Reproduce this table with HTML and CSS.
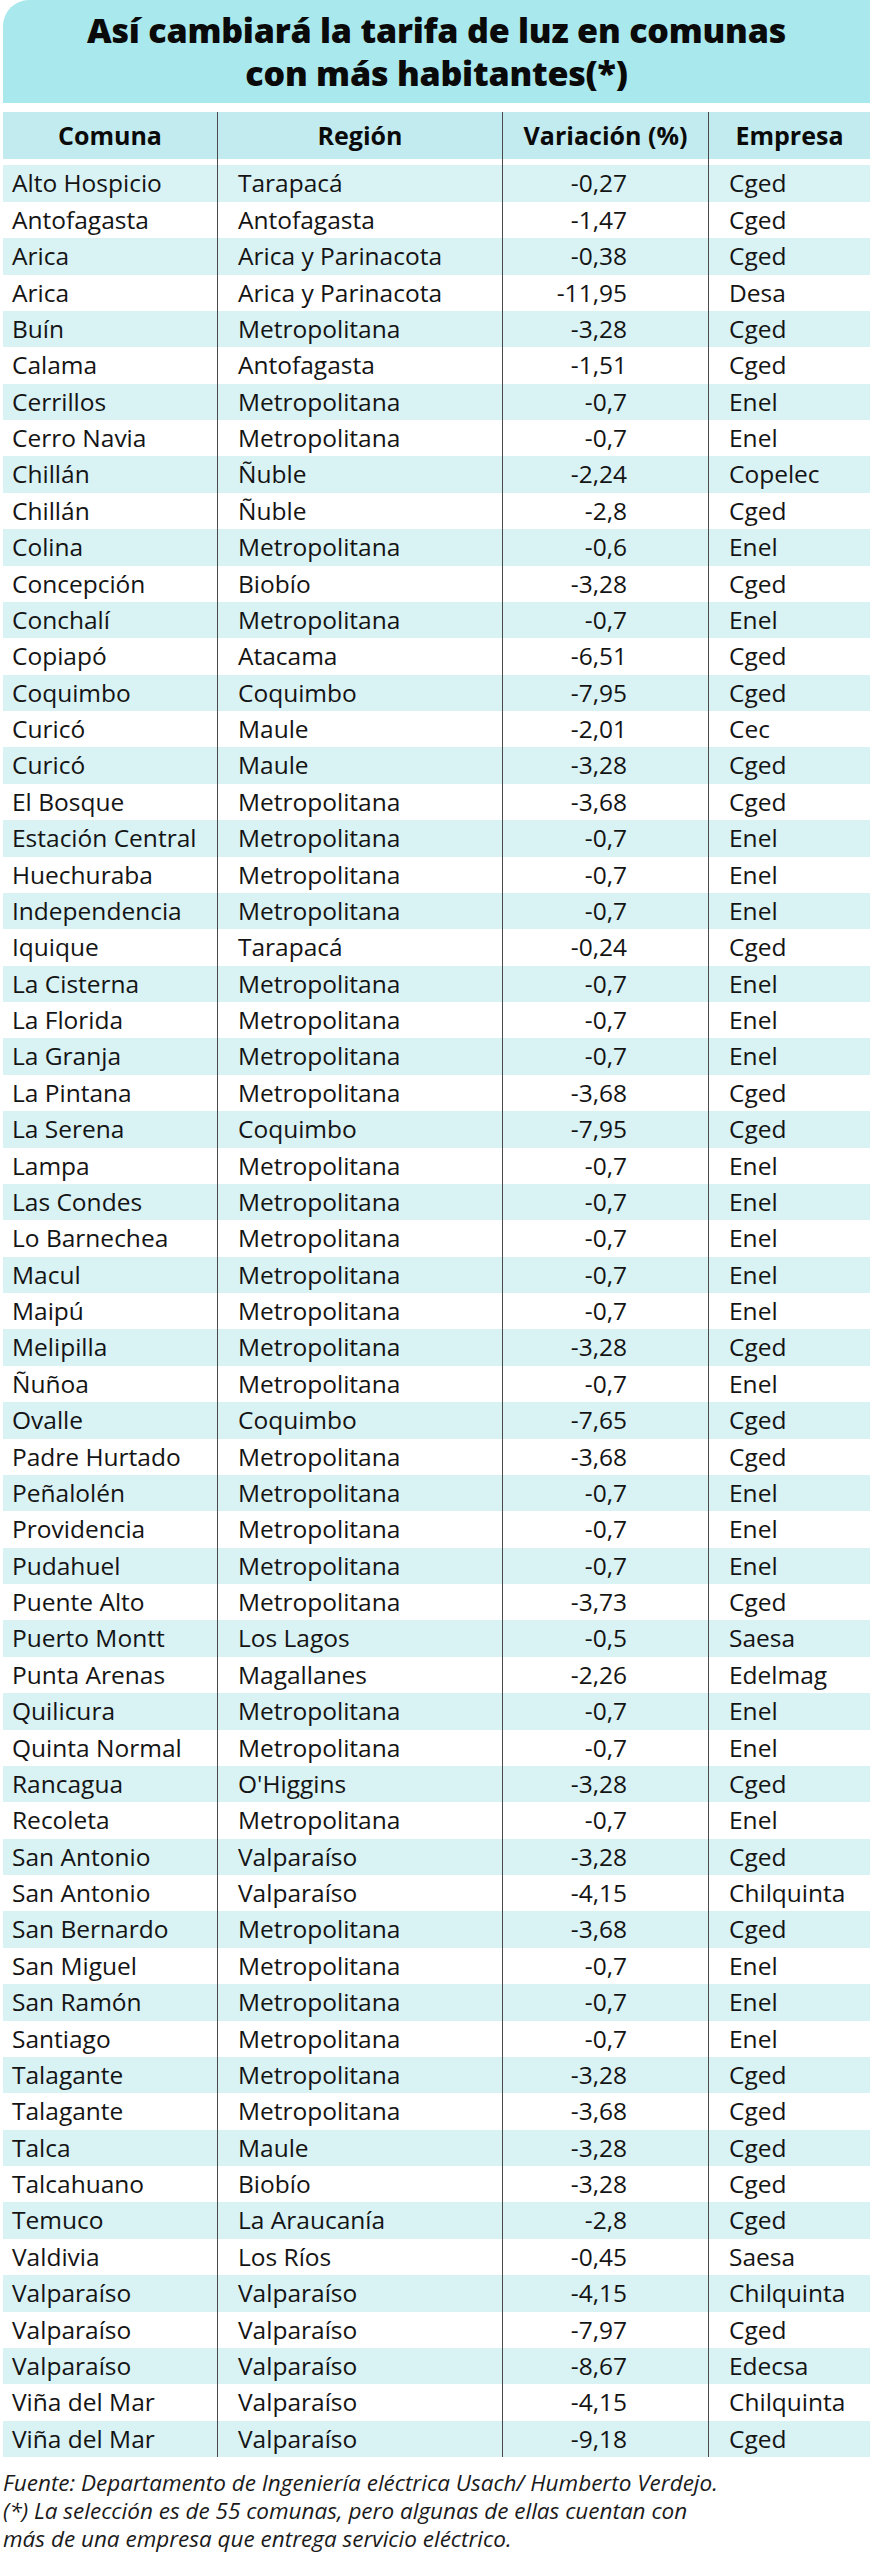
FILE: index.html
```html
<!DOCTYPE html>
<html lang="es">
<head>
<meta charset="utf-8">
<title>Así cambiará la tarifa de luz en comunas con más habitantes</title>
<link rel="stylesheet" href="styles.css">
</head>
<body>
<div class="page">
  <h1 class="title">Así cambiará la tarifa de luz en comunas<br>con más habitantes(*)</h1>
  <div class="table">
    <div class="row head"><div class="c c1">Comuna</div><div class="c c2">Región</div><div class="c c3">Variación (%)</div><div class="c c4">Empresa</div></div>
    <div class="row"><div class="c c1">Alto Hospicio</div><div class="c c2">Tarapacá</div><div class="c c3">-0,27</div><div class="c c4">Cged</div></div>
    <div class="row"><div class="c c1">Antofagasta</div><div class="c c2">Antofagasta</div><div class="c c3">-1,47</div><div class="c c4">Cged</div></div>
    <div class="row"><div class="c c1">Arica</div><div class="c c2">Arica y Parinacota</div><div class="c c3">-0,38</div><div class="c c4">Cged</div></div>
    <div class="row"><div class="c c1">Arica</div><div class="c c2">Arica y Parinacota</div><div class="c c3">-11,95</div><div class="c c4">Desa</div></div>
    <div class="row"><div class="c c1">Buín</div><div class="c c2">Metropolitana</div><div class="c c3">-3,28</div><div class="c c4">Cged</div></div>
    <div class="row"><div class="c c1">Calama</div><div class="c c2">Antofagasta</div><div class="c c3">-1,51</div><div class="c c4">Cged</div></div>
    <div class="row"><div class="c c1">Cerrillos</div><div class="c c2">Metropolitana</div><div class="c c3">-0,7</div><div class="c c4">Enel</div></div>
    <div class="row"><div class="c c1">Cerro Navia</div><div class="c c2">Metropolitana</div><div class="c c3">-0,7</div><div class="c c4">Enel</div></div>
    <div class="row"><div class="c c1">Chillán</div><div class="c c2">Ñuble</div><div class="c c3">-2,24</div><div class="c c4">Copelec</div></div>
    <div class="row"><div class="c c1">Chillán</div><div class="c c2">Ñuble</div><div class="c c3">-2,8</div><div class="c c4">Cged</div></div>
    <div class="row"><div class="c c1">Colina</div><div class="c c2">Metropolitana</div><div class="c c3">-0,6</div><div class="c c4">Enel</div></div>
    <div class="row"><div class="c c1">Concepción</div><div class="c c2">Biobío</div><div class="c c3">-3,28</div><div class="c c4">Cged</div></div>
    <div class="row"><div class="c c1">Conchalí</div><div class="c c2">Metropolitana</div><div class="c c3">-0,7</div><div class="c c4">Enel</div></div>
    <div class="row"><div class="c c1">Copiapó</div><div class="c c2">Atacama</div><div class="c c3">-6,51</div><div class="c c4">Cged</div></div>
    <div class="row"><div class="c c1">Coquimbo</div><div class="c c2">Coquimbo</div><div class="c c3">-7,95</div><div class="c c4">Cged</div></div>
    <div class="row"><div class="c c1">Curicó</div><div class="c c2">Maule</div><div class="c c3">-2,01</div><div class="c c4">Cec</div></div>
    <div class="row"><div class="c c1">Curicó</div><div class="c c2">Maule</div><div class="c c3">-3,28</div><div class="c c4">Cged</div></div>
    <div class="row"><div class="c c1">El Bosque</div><div class="c c2">Metropolitana</div><div class="c c3">-3,68</div><div class="c c4">Cged</div></div>
    <div class="row"><div class="c c1">Estación Central</div><div class="c c2">Metropolitana</div><div class="c c3">-0,7</div><div class="c c4">Enel</div></div>
    <div class="row"><div class="c c1">Huechuraba</div><div class="c c2">Metropolitana</div><div class="c c3">-0,7</div><div class="c c4">Enel</div></div>
    <div class="row"><div class="c c1">Independencia</div><div class="c c2">Metropolitana</div><div class="c c3">-0,7</div><div class="c c4">Enel</div></div>
    <div class="row"><div class="c c1">Iquique</div><div class="c c2">Tarapacá</div><div class="c c3">-0,24</div><div class="c c4">Cged</div></div>
    <div class="row"><div class="c c1">La Cisterna</div><div class="c c2">Metropolitana</div><div class="c c3">-0,7</div><div class="c c4">Enel</div></div>
    <div class="row"><div class="c c1">La Florida</div><div class="c c2">Metropolitana</div><div class="c c3">-0,7</div><div class="c c4">Enel</div></div>
    <div class="row"><div class="c c1">La Granja</div><div class="c c2">Metropolitana</div><div class="c c3">-0,7</div><div class="c c4">Enel</div></div>
    <div class="row"><div class="c c1">La Pintana</div><div class="c c2">Metropolitana</div><div class="c c3">-3,68</div><div class="c c4">Cged</div></div>
    <div class="row"><div class="c c1">La Serena</div><div class="c c2">Coquimbo</div><div class="c c3">-7,95</div><div class="c c4">Cged</div></div>
    <div class="row"><div class="c c1">Lampa</div><div class="c c2">Metropolitana</div><div class="c c3">-0,7</div><div class="c c4">Enel</div></div>
    <div class="row"><div class="c c1">Las Condes</div><div class="c c2">Metropolitana</div><div class="c c3">-0,7</div><div class="c c4">Enel</div></div>
    <div class="row"><div class="c c1">Lo Barnechea</div><div class="c c2">Metropolitana</div><div class="c c3">-0,7</div><div class="c c4">Enel</div></div>
    <div class="row"><div class="c c1">Macul</div><div class="c c2">Metropolitana</div><div class="c c3">-0,7</div><div class="c c4">Enel</div></div>
    <div class="row"><div class="c c1">Maipú</div><div class="c c2">Metropolitana</div><div class="c c3">-0,7</div><div class="c c4">Enel</div></div>
    <div class="row"><div class="c c1">Melipilla</div><div class="c c2">Metropolitana</div><div class="c c3">-3,28</div><div class="c c4">Cged</div></div>
    <div class="row"><div class="c c1">Ñuñoa</div><div class="c c2">Metropolitana</div><div class="c c3">-0,7</div><div class="c c4">Enel</div></div>
    <div class="row"><div class="c c1">Ovalle</div><div class="c c2">Coquimbo</div><div class="c c3">-7,65</div><div class="c c4">Cged</div></div>
    <div class="row"><div class="c c1">Padre Hurtado</div><div class="c c2">Metropolitana</div><div class="c c3">-3,68</div><div class="c c4">Cged</div></div>
    <div class="row"><div class="c c1">Peñalolén</div><div class="c c2">Metropolitana</div><div class="c c3">-0,7</div><div class="c c4">Enel</div></div>
    <div class="row"><div class="c c1">Providencia</div><div class="c c2">Metropolitana</div><div class="c c3">-0,7</div><div class="c c4">Enel</div></div>
    <div class="row"><div class="c c1">Pudahuel</div><div class="c c2">Metropolitana</div><div class="c c3">-0,7</div><div class="c c4">Enel</div></div>
    <div class="row"><div class="c c1">Puente Alto</div><div class="c c2">Metropolitana</div><div class="c c3">-3,73</div><div class="c c4">Cged</div></div>
    <div class="row"><div class="c c1">Puerto Montt</div><div class="c c2">Los Lagos</div><div class="c c3">-0,5</div><div class="c c4">Saesa</div></div>
    <div class="row"><div class="c c1">Punta Arenas</div><div class="c c2">Magallanes</div><div class="c c3">-2,26</div><div class="c c4">Edelmag</div></div>
    <div class="row"><div class="c c1">Quilicura</div><div class="c c2">Metropolitana</div><div class="c c3">-0,7</div><div class="c c4">Enel</div></div>
    <div class="row"><div class="c c1">Quinta Normal</div><div class="c c2">Metropolitana</div><div class="c c3">-0,7</div><div class="c c4">Enel</div></div>
    <div class="row"><div class="c c1">Rancagua</div><div class="c c2">O'Higgins</div><div class="c c3">-3,28</div><div class="c c4">Cged</div></div>
    <div class="row"><div class="c c1">Recoleta</div><div class="c c2">Metropolitana</div><div class="c c3">-0,7</div><div class="c c4">Enel</div></div>
    <div class="row"><div class="c c1">San Antonio</div><div class="c c2">Valparaíso</div><div class="c c3">-3,28</div><div class="c c4">Cged</div></div>
    <div class="row"><div class="c c1">San Antonio</div><div class="c c2">Valparaíso</div><div class="c c3">-4,15</div><div class="c c4">Chilquinta</div></div>
    <div class="row"><div class="c c1">San Bernardo</div><div class="c c2">Metropolitana</div><div class="c c3">-3,68</div><div class="c c4">Cged</div></div>
    <div class="row"><div class="c c1">San Miguel</div><div class="c c2">Metropolitana</div><div class="c c3">-0,7</div><div class="c c4">Enel</div></div>
    <div class="row"><div class="c c1">San Ramón</div><div class="c c2">Metropolitana</div><div class="c c3">-0,7</div><div class="c c4">Enel</div></div>
    <div class="row"><div class="c c1">Santiago</div><div class="c c2">Metropolitana</div><div class="c c3">-0,7</div><div class="c c4">Enel</div></div>
    <div class="row"><div class="c c1">Talagante</div><div class="c c2">Metropolitana</div><div class="c c3">-3,28</div><div class="c c4">Cged</div></div>
    <div class="row"><div class="c c1">Talagante</div><div class="c c2">Metropolitana</div><div class="c c3">-3,68</div><div class="c c4">Cged</div></div>
    <div class="row"><div class="c c1">Talca</div><div class="c c2">Maule</div><div class="c c3">-3,28</div><div class="c c4">Cged</div></div>
    <div class="row"><div class="c c1">Talcahuano</div><div class="c c2">Biobío</div><div class="c c3">-3,28</div><div class="c c4">Cged</div></div>
    <div class="row"><div class="c c1">Temuco</div><div class="c c2">La Araucanía</div><div class="c c3">-2,8</div><div class="c c4">Cged</div></div>
    <div class="row"><div class="c c1">Valdivia</div><div class="c c2">Los Ríos</div><div class="c c3">-0,45</div><div class="c c4">Saesa</div></div>
    <div class="row"><div class="c c1">Valparaíso</div><div class="c c2">Valparaíso</div><div class="c c3">-4,15</div><div class="c c4">Chilquinta</div></div>
    <div class="row"><div class="c c1">Valparaíso</div><div class="c c2">Valparaíso</div><div class="c c3">-7,97</div><div class="c c4">Cged</div></div>
    <div class="row"><div class="c c1">Valparaíso</div><div class="c c2">Valparaíso</div><div class="c c3">-8,67</div><div class="c c4">Edecsa</div></div>
    <div class="row"><div class="c c1">Viña del Mar</div><div class="c c2">Valparaíso</div><div class="c c3">-4,15</div><div class="c c4">Chilquinta</div></div>
    <div class="row"><div class="c c1">Viña del Mar</div><div class="c c2">Valparaíso</div><div class="c c3">-9,18</div><div class="c c4">Cged</div></div>
  </div>
  <p class="notes">Fuente: Departamento de Ingeniería eléctrica Usach/ Humberto Verdejo.<br>(*) La selección es de 55 comunas, pero algunas de ellas cuentan con<br>más de una empresa que entrega servicio eléctrico.</p>
</div>
</body>
</html>
```
FILE: styles.css
```css
html, body {
  margin: 0;
  padding: 0;
  background: #ffffff;
}

.page {
  width: 867px;
  margin: 0 0 0 3px;
  font-family: "Open Sans", "Noto Sans", sans-serif;
  color: #141414;
}

.title {
  margin: 0;
  padding: 9px 0 9px;
  background: #a9e8ec;
  border-top-left-radius: 26px;
  text-align: center;
  font-size: 34px;
  line-height: 42.7px;
  font-weight: 800;
  font-stretch: 100%;
  letter-spacing: -0.2px;
  color: #0a0a0a;
}

.table {
  margin-top: 9px;
  display: flex;
  flex-direction: column;
}

.row {
  display: grid;
  grid-template-columns: 214px 285px 206px 1fr;
  height: 36.38px;
  font-size: 24.5px;
  line-height: 36.38px;
  font-stretch: 93%;
}

.row:nth-child(even) {
  background: #d9f2f4;
}

.row.head {
  height: 53px;
  background: linear-gradient(#c2ebef 0, #c2ebef 47px, #ffffff 47px);
  font-weight: 700;
  font-size: 25px;
  line-height: 47px;
  font-stretch: 95%;
  color: #0a0a0a;
}

.c {
  white-space: nowrap;
  overflow: hidden;
}

.c2, .c3, .c4 {
  border-left: 1px solid #4a4a4a;
}

.c1 {
  padding-left: 9px;
}

.c2 {
  padding-left: 20px;
}

.c3 {
  text-align: right;
  padding-right: 81px;
}

.c4 {
  padding-left: 20px;
}

.head .c {
  text-align: center;
  padding: 0;
}

.notes {
  margin: 12px 0 0;
  font-style: italic;
  font-size: 22.5px;
  line-height: 27.9px;
  font-stretch: 100%;
  color: #1a1a1a;
}
```
